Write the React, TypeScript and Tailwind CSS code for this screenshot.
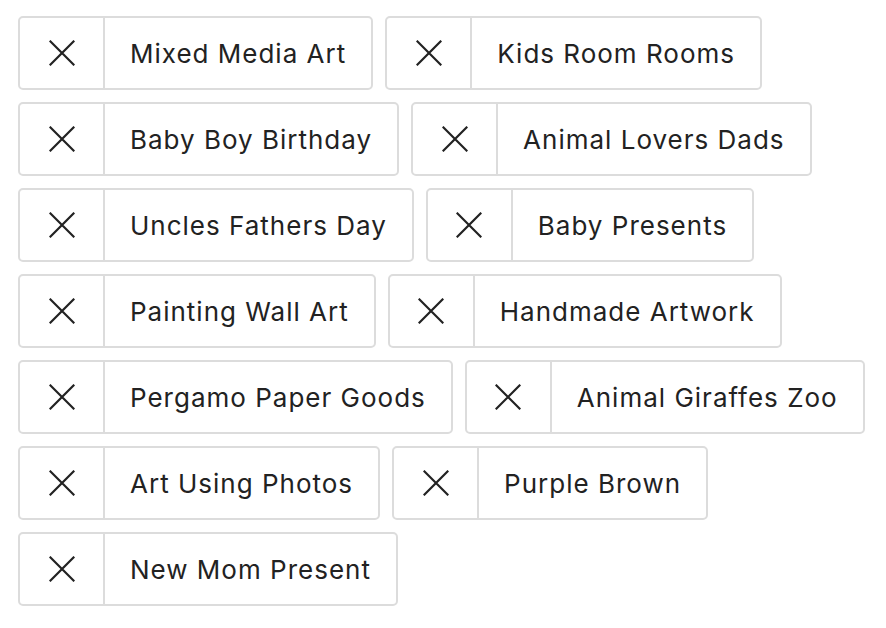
import React from 'react';

const tags = [
  'Mixed Media Art',
  'Kids Room Rooms',
  'Baby Boy Birthday',
  'Animal Lovers Dads',
  'Uncles Fathers Day',
  'Baby Presents',
  'Painting Wall Art',
  'Handmade Artwork',
  'Pergamo Paper Goods',
  'Animal Giraffes Zoo',
  'Art Using Photos',
  'Purple Brown',
  'New Mom Present',
];

function CloseIcon() {
  return (
    <svg width="26" height="26" viewBox="0 0 26 26" fill="none" stroke="#222222" strokeWidth="2.2" strokeLinecap="square">
      <path d="M1.5 1.5 L24.5 24.5 M24.5 1.5 L1.5 24.5" />
    </svg>
  );
}

function Tag({ label }: { label: string }) {
  return (
    <div className="flex h-[74px] items-stretch rounded-[5px] border-2 border-[#dcdcdc] bg-white">
      <button className="flex w-[85px] items-center justify-center border-r-2 border-[#dcdcdc]">
        <CloseIcon />
      </button>
      <span className="flex items-center px-[25px] text-[26px] text-[#222222] tracking-[1px]">
        {label}
      </span>
    </div>
  );
}

export default function App() {
  return (
    <div className="min-h-screen bg-white pl-[18px] pr-[10px] pt-[16px] font-['Inter',sans-serif]">
      <div className="flex flex-wrap gap-3">
        {tags.map((t) => (
          <Tag key={t} label={t} />
        ))}
      </div>
    </div>
  );
}
